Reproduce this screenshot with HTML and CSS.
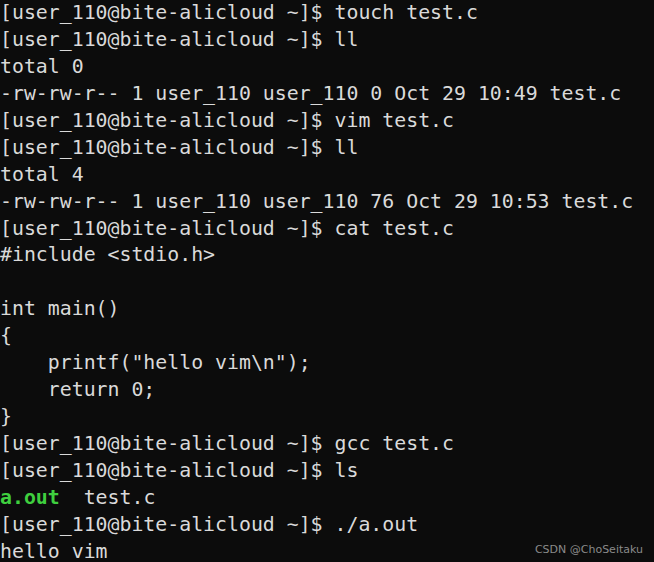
FILE: index.html
```html
<!DOCTYPE html>
<html>
<head>
<meta charset="utf-8">
<link rel="stylesheet" href="styles.css">
</head>
<body>
<div class="term">
<div class="line">[user_110@bite-alicloud ~]$ touch test.c</div>
<div class="line">[user_110@bite-alicloud ~]$ ll</div>
<div class="line">total 0</div>
<div class="line">-rw-rw-r-- 1 user_110 user_110 0 Oct 29 10:49 test.c</div>
<div class="line">[user_110@bite-alicloud ~]$ vim test.c</div>
<div class="line">[user_110@bite-alicloud ~]$ ll</div>
<div class="line">total 4</div>
<div class="line">-rw-rw-r-- 1 user_110 user_110 76 Oct 29 10:53 test.c</div>
<div class="line">[user_110@bite-alicloud ~]$ cat test.c</div>
<div class="line">#include &lt;stdio.h&gt;</div>
<div class="line"> </div>
<div class="line">int main()</div>
<div class="line">{</div>
<div class="line">    printf("hello vim\n");</div>
<div class="line">    return 0;</div>
<div class="line">}</div>
<div class="line">[user_110@bite-alicloud ~]$ gcc test.c</div>
<div class="line">[user_110@bite-alicloud ~]$ ls</div>
<div class="line"><span class="exe">a.out</span>  test.c</div>
<div class="line">[user_110@bite-alicloud ~]$ ./a.out</div>
<div class="line">hello vim</div>
</div>
<div class="mark">CSDN @ChoSeitaku</div>
</body>
</html>
```

FILE: styles.css
```css
html, body {
  margin: 0;
  padding: 0;
  background: #0c0c0c;
  width: 654px;
  height: 562px;
  overflow: hidden;
}
.term {
  font-family: "DejaVu Sans Mono", monospace;
  font-size: 19.85px;
  line-height: 26.95px;
  color: #dadada;
}
.line {
  height: 26.95px;
  white-space: pre;
}
.exe {
  color: #3fcf3f;
  font-weight: bold;
}
.mark {
  position: absolute;
  right: 11px;
  bottom: 6px;
  font-family: "DejaVu Sans", sans-serif;
  font-size: 11px;
  color: #8a8a8a;
}
```
